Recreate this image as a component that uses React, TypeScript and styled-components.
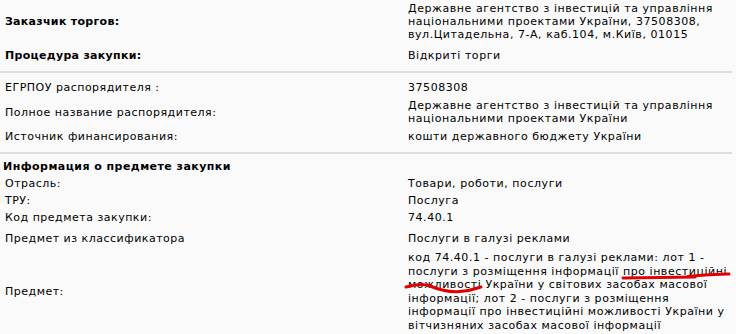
import React from "react";
import styled, { createGlobalStyle } from "styled-components";

const GlobalStyle = createGlobalStyle`
  html, body {
    margin: 0;
    background: #fafafa;
  }
  body {
    font-family: "DejaVu Sans", Verdana, sans-serif;
    font-size: 11px;
    letter-spacing: 0.55px;
    color: #000;
  }
`;

const Sheet = styled.div`
  width: 732px;
`;

const Row = styled.div<{ $pad: string }>`
  display: grid;
  grid-template-columns: 408px 324px;
  align-items: center;
  padding: ${(p) => p.$pad};
  line-height: 13px;
`;

const Label = styled.div<{ $bold?: boolean }>`
  padding-left: 5px;
  font-weight: ${(p) => (p.$bold ? "bold" : "normal")};
  letter-spacing: ${(p) => (p.$bold ? "0.3px" : "0.5px")};
`;

const Value = styled.div<{ $lh?: number }>`
  position: relative;
  line-height: ${(p) => (p.$lh ? `${p.$lh}px` : "13px")};
`;

const Divider = styled.hr<{ $top: number; $bottom: number }>`
  border: 0;
  height: 2px;
  background: #dedede;
  margin: ${(p) => p.$top}px 0 ${(p) => p.$bottom}px;
`;

const SectionTitle = styled.div`
  padding: 6px 0 2px 3px;
  line-height: 13px;
  font-weight: bold;
  letter-spacing: 0.45px;
`;

// red pen strokes laid over the lot description
const Marks = styled.svg`
  position: absolute;
  left: 0;
  top: 0;
  overflow: visible;
  pointer-events: none;
`;

export default function App() {
  return (
    <>
      <GlobalStyle />
      <Sheet>
        <Row $pad="2px 0 4px">
          <Label $bold>Заказчик торгов:</Label>
          <Value>
            Державне агентство з інвестицій та управління національними
            проектами України, 37508308, вул.Цитадельна, 7-А, каб.104,
            м.Київ, 01015
          </Value>
        </Row>
        <Row $pad="4px 0 4px">
          <Label $bold>Процедура закупки:</Label>
          <Value>Відкриті торги</Value>
        </Row>
        <Divider $top={5} $bottom={5} />

        <Row $pad="3px 0 2px">
          <Label>ЕГРПОУ распорядителя :</Label>
          <Value>37508308</Value>
        </Row>
        <Row $pad="3px 0 2px">
          <Label>Полное название распорядителя:</Label>
          <Value>
            Державне агентство з інвестицій та управління національними
            проектами України
          </Value>
        </Row>
        <Row $pad="3px 0 2px">
          <Label>Источник финансирования:</Label>
          <Value>кошти державного бюджету України</Value>
        </Row>
        <Divider $top={7} $bottom={0} />

        <SectionTitle>Информация о предмете закупки</SectionTitle>
        <Row $pad="2px 0">
          <Label>Отрасль:</Label>
          <Value>Товари, роботи, послуги</Value>
        </Row>
        <Row $pad="2px 0">
          <Label>ТРУ:</Label>
          <Value>Послуга</Value>
        </Row>
        <Row $pad="2px 0">
          <Label>Код предмета закупки:</Label>
          <Value>74.40.1</Value>
        </Row>
        <Row $pad="6px 0 4px">
          <Label>Предмет из классификатора</Label>
          <Value>Послуги в галузі реклами</Value>
        </Row>
        <Row $pad="2px 0">
          <Label>Предмет:</Label>
          <Value $lh={13.5}>
            код 74.40.1 - послуги в галузі реклами: лот 1 - послуги з
            розміщення інформації про інвестиційні можливості України у
            світових засобах масової інформації; лот 2 - послуги з розміщення
            інформації про інвестиційні можливості України у вітчизняних
            засобах масової інформації
            <Marks width="324" height="81" viewBox="0 0 324 81">
              <g
                fill="none"
                stroke="#e00000"
                strokeWidth="3"
                strokeLinecap="round"
              >
                <path d="M215 27 C238 26.5, 264 26.5, 287 26" />
                <path d="M280 25.5 C294 24, 308 23.5, 321 23" />
                <path d="M-2 36 C8 33, 16 32.5, 22 35 S38 41.5, 52 40.5 S68 37, 73 36" />
              </g>
            </Marks>
          </Value>
        </Row>
      </Sheet>
    </>
  );
}
